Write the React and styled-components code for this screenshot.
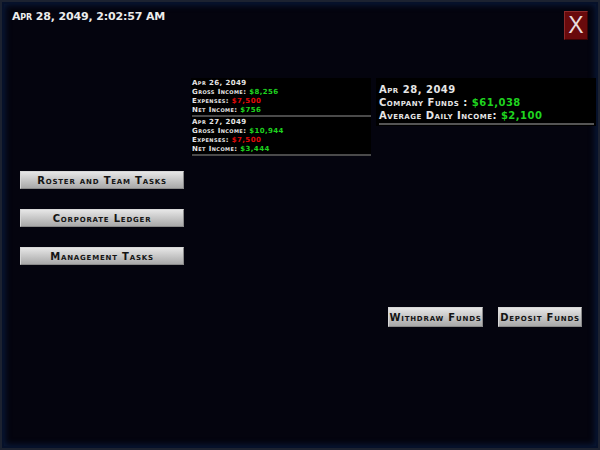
import React from 'react';
import styled, { createGlobalStyle } from 'styled-components';

const GlobalStyle = createGlobalStyle`
  html, body {
    margin: 0;
    padding: 0;
    background: #03040c;
  }
`;

const Screen = styled.div`
  box-sizing: border-box;
  width: 600px;
  height: 450px;
  background: #04040e;
  border: 2px solid #1c2230;
  box-shadow: inset 0 0 0 2px #06112a, inset 0 0 6px 3px #0a1a3a;
  font-family: "DejaVu Sans", "Liberation Sans", sans-serif;
  font-variant: small-caps;
  color: #e6e6e6;
  padding: 0 3px 0 18px;
  display: flex;
  flex-direction: column;
`;

const Header = styled.div`
  display: flex;
  justify-content: space-between;
  align-items: flex-start;
  height: 76px;
`;

const Clock = styled.div`
  margin: 8px 0 0 -8px;
  font-size: 11px;
  font-weight: bold;
  letter-spacing: -0.15px;
  color: #ececec;
`;

const CloseButton = styled.div`
  margin: 9px 7px 0 0;
  width: 24px;
  height: 29px;
  box-sizing: border-box;
  background: #690a0c;
  border-top: 1px solid #8c2a2a;
  border-left: 1px solid #8c2a2a;
  border-right: 1px solid #3a0405;
  border-bottom: 1px solid #3a0405;
  display: flex;
  align-items: center;
  justify-content: center;
  color: #e8dcdc;
  font-size: 23px;
  font-variant: normal;
  font-family: "Liberation Sans", sans-serif;
`;

const Body = styled.div`
  display: grid;
  grid-template-columns: 166px 180px 220px;
  column-gap: 5px;
  align-items: start;
`;

const NavColumn = styled.div`
  display: flex;
  flex-direction: column;
  gap: 20px;
  padding-top: 93px;
`;

const GreyButton = styled.div`
  box-sizing: border-box;
  width: ${p => p.$w || 164}px;
  height: ${p => p.$h || 18}px;
  background: linear-gradient(#e6e6e6, #c4c4c4 55%, #a9a9a9);
  border: 1px solid #d8d8d8;
  border-bottom-color: #8a8a8a;
  border-right-color: #8a8a8a;
  color: #141414;
  font-size: 10px;
  font-weight: bold;
  letter-spacing: 0.8px;
  display: flex;
  align-items: center;
  justify-content: center;
  white-space: nowrap;
`;

const Ledger = styled.div`
  background: #000;
  padding: 0 0 0 1px;
  font-size: 7px;
  font-weight: bold;
  letter-spacing: 0.4px;
`;

const Day = styled.div`
  border-bottom: 2px solid #4a4a4a;
  padding-bottom: 1px;
`;

const Line = styled.div`
  height: 9px;
  line-height: 9px;
  padding-top: 1px;
  margin-bottom: -1px;
  white-space: nowrap;
`;

const Money = styled.span`
  color: ${p => (p.$neg ? '#e00a0a' : '#1fd41f')};
`;

const RightColumn = styled.div`
  display: flex;
  flex-direction: column;
`;

const Summary = styled.div`
  background: #000;
  padding: 5px 2px 1px 3px;
  font-size: 10px;
  font-weight: bold;
  letter-spacing: 0.5px;
`;

const SummaryLine = styled.div`
  height: 13px;
  line-height: 13px;
  white-space: nowrap;
`;

const Rule = styled.div`
  height: 2px;
  background: #555;
  margin-top: 1px;
`;

const Actions = styled.div`
  display: flex;
  gap: 15px;
  padding: 181px 0 0 12px;
`;

const days = [
  { date: 'Apr 26, 2049', gross: '$8,256', exp: '$7,500', net: '$756' },
  { date: 'Apr 27, 2049', gross: '$10,944', exp: '$7,500', net: '$3,444' },
];

export default function App() {
  return (
    <>
      <GlobalStyle />
      <Screen>
        <Header>
          <Clock>Apr 28, 2049, 2:02:57 AM</Clock>
          <CloseButton>X</CloseButton>
        </Header>
        <Body>
          <NavColumn>
            <GreyButton>Roster and Team Tasks</GreyButton>
            <GreyButton>Corporate Ledger</GreyButton>
            <GreyButton>Management Tasks</GreyButton>
          </NavColumn>
          <Ledger>
            {days.map(d => (
              <Day key={d.date}>
                <Line>{d.date}</Line>
                <Line>Gross Income: <Money>{d.gross}</Money></Line>
                <Line>Expenses: <Money $neg>{d.exp}</Money></Line>
                <Line>Net Income: <Money>{d.net}</Money></Line>
              </Day>
            ))}
          </Ledger>
          <RightColumn>
            <Summary>
              <SummaryLine>Apr 28, 2049</SummaryLine>
              <SummaryLine>Company Funds : <Money>$61,038</Money></SummaryLine>
              <SummaryLine>Average Daily Income: <Money>$2,100</Money></SummaryLine>
              <Rule />
            </Summary>
            <Actions>
              <GreyButton $w={95} $h={20}>Withdraw Funds</GreyButton>
              <GreyButton $w={84} $h={20}>Deposit Funds</GreyButton>
            </Actions>
          </RightColumn>
        </Body>
      </Screen>
    </>
  );
}
